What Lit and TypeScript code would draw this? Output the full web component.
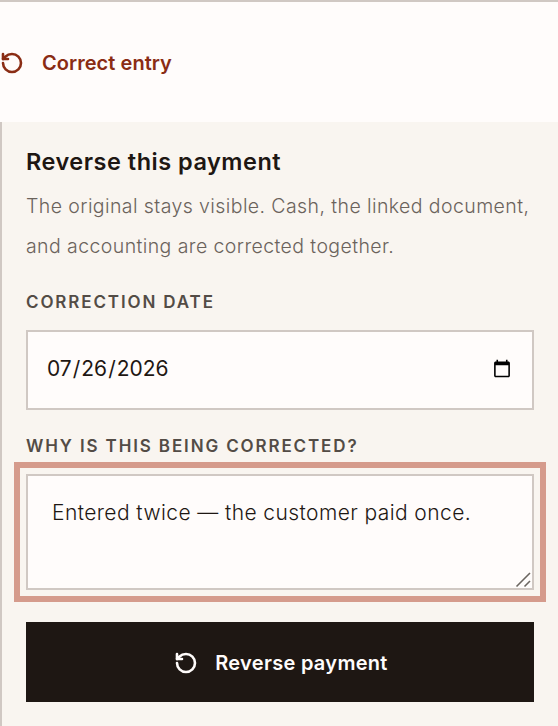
import { LitElement, html, css } from "lit";
import { customElement } from "lit/decorators.js";

const undo = html`<svg class="icon" viewBox="0 0 24 24" fill="none" stroke="currentColor" stroke-width="2.6" stroke-linecap="round" stroke-linejoin="round"><path d="M3 12a9 9 0 1 0 9-9 9.75 9.75 0 0 0-6.74 2.74L3 8"/><path d="M3 3v5h5"/></svg>`;

@customElement("app-root")
export class AppRoot extends LitElement {
  static styles = css`
    :host { display: block; background: #fffcfb; font-family: Inter, "Liberation Sans", sans-serif; color: #1e1713; min-height: 726px; }
    * { box-sizing: border-box; }
    .top { border-top: 2px solid #d0c8c3; height: 122px; display: flex; align-items: center; gap: 18px; color: #8a2c14; font-size: 20px; font-weight: 600; letter-spacing: 0.05px; padding-top: 1px; }
    .icon { width: 24px; height: 24px; flex: none; }
    .panel { background: #f9f5f0; border-left: 2px solid #d0c8c3; padding: 24px; display: flex; flex-direction: column; }
    h2 { margin: 0; font-size: 23.5px; font-weight: 600; line-height: 32px; letter-spacing: 0.5px; }
    p { margin: 8px 0 0; font-size: 19.5px; font-weight: 350; line-height: 40px; color: #6b635c; letter-spacing: 0.41px; }
    label { display: block; font-size: 17px; font-weight: 600; letter-spacing: 1.87px; color: #534c46; text-transform: uppercase; line-height: 24px; }
    .date-label, .why-label { margin-top: 24px; }
    input, textarea { display: block; width: 100%; margin: 16px 0 0; border: 2px solid #d0c8c3; background: #fffcfb; color: #1e1713; font-family: inherit; font-size: 21px; border-radius: 0; }
    input { height: 80px; padding: 0 18px 3px; }
    input::-webkit-calendar-picker-indicator { font-size: 20px; }
    .area { position: relative; margin-top: 16px; }
    textarea { margin: 0; height: 116px; padding: 17px 24px; outline: 6px solid #d59b8c; outline-offset: 6px; line-height: 40px; letter-spacing: 0.41px; font-weight: 350; resize: none; }
    .grip { position: absolute; right: 2px; bottom: 2px; width: 18px; height: 18px; color: #6b6560; pointer-events: none; }
    button { margin-top: 32px; height: 80px; width: 100%; padding: 2px 0 0 2px; border: 0; background: #1e1713; color: #fffcfb; font-family: inherit; font-size: 20px; font-weight: 600; letter-spacing: 0.3px; display: flex; align-items: center; justify-content: center; gap: 17px; }
  `;
  render() {
    return html`
      <div class="top">${undo}<span>Correct entry</span></div>
      <div class="panel">
        <h2>Reverse this payment</h2>
        <p>The original stays visible. Cash, the linked document, and accounting are corrected together.</p>
        <label class="date-label" for="d">Correction date</label>
        <input id="d" type="date" value="2026-07-26" />
        <label class="why-label" for="w">Why is this being corrected?</label>
        <div class="area">
          <textarea id="w">Entered twice — the customer paid once.</textarea>
          <svg class="grip" viewBox="0 0 18 18" fill="none" stroke="currentColor" stroke-width="1.6"><path d="M2.5 16.5 16 3"/><path d="M10.5 16.5 16 11"/></svg>
        </div>
        <button>${undo}<span>Reverse payment</span></button>
      </div>
    `;
  }
}
